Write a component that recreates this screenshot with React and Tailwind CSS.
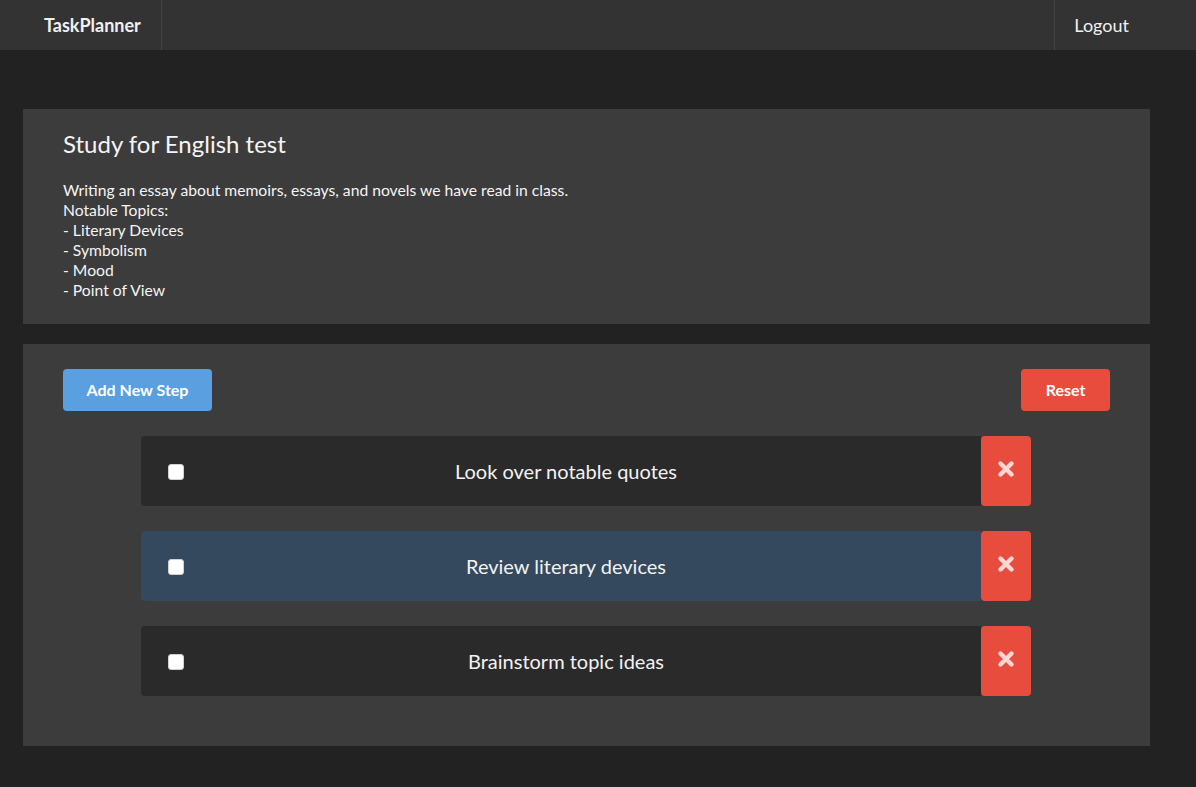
import React from "react";

const XIcon = () => (
  <svg width="18" height="18" viewBox="0 0 18 18" fill="none">
    <path d="M3.5 3.5 L14.5 14.5 M14.5 3.5 L3.5 14.5" stroke="#fdd8d4" strokeWidth="4.4" strokeLinecap="round" />
  </svg>
);

const Step = ({ text, active }) => (
  <div className="flex h-[70px] w-[890px]">
    <div
      className={
        "relative flex flex-1 items-center rounded-l-[4px] " +
        (active ? "bg-[#34495e]" : "bg-[#2a2a2a]")
      }
    >
      <div className="absolute left-[27px] top-[28px] h-[16px] w-[16px] rounded-[3px] border border-[#cfcfcf] bg-white" />
      <div className="flex-1 pl-[10px] text-center text-[20px] text-[#f2f2f2]">{text}</div>
    </div>
    <div className="flex w-[50px] items-center justify-center rounded-[4px] bg-[#e74c3c] pb-[4px]">
      <XIcon />
    </div>
  </div>
);

export default function App() {
  return (
    <div
      className="min-h-[787px] bg-[#222222] pb-[41px]"
      style={{ fontFamily: "Lato, 'Open Sans', sans-serif" }}
    >
      <nav className="flex h-[50px] items-stretch justify-between bg-[#333333] pl-[24px] pr-[47px]">
        <div className="flex items-center border-r border-[#444444] px-[20px] text-[18px] font-bold text-[#f0f0f0]">
          TaskPlanner
        </div>
        <div className="flex items-center border-l border-[#444444] pl-[19px] pr-[20px] text-[18px] text-[#f0f0f0]">
          Logout
        </div>
      </nav>

      <div className="ml-[23px] mt-[59px] w-[1127px] bg-[#3c3c3c] px-[40px] pb-[24px] pt-[21px] text-[#f4f4f4]">
        <h1 className="text-[24px] leading-[28px]">Study for English test</h1>
        <div className="mt-[22px] text-[15.7px] leading-[20px]">
          <div>Writing an essay about memoirs, essays, and novels we have read in class.</div>
          <div>Notable Topics:</div>
          <div>- Literary Devices</div>
          <div>- Symbolism</div>
          <div>- Mood</div>
          <div>- Point of View</div>
        </div>
      </div>

      <div className="ml-[23px] mt-[20px] w-[1127px] bg-[#3c3c3c] px-[40px] pb-[50px] pt-[25px]">
        <div className="flex justify-between">
          <button className="h-[42px] w-[149px] rounded-[4px] bg-[#5a9fe0] text-[16px] font-bold text-white">
            Add New Step
          </button>
          <button className="h-[42px] w-[89px] rounded-[4px] bg-[#e74c3c] text-[16px] font-bold text-white">
            Reset
          </button>
        </div>
        <div className="ml-[78px] mt-[25px] flex flex-col gap-[25px]">
          <Step text="Look over notable quotes" />
          <Step text="Review literary devices" active />
          <Step text="Brainstorm topic ideas" />
        </div>
      </div>
    </div>
  );
}
